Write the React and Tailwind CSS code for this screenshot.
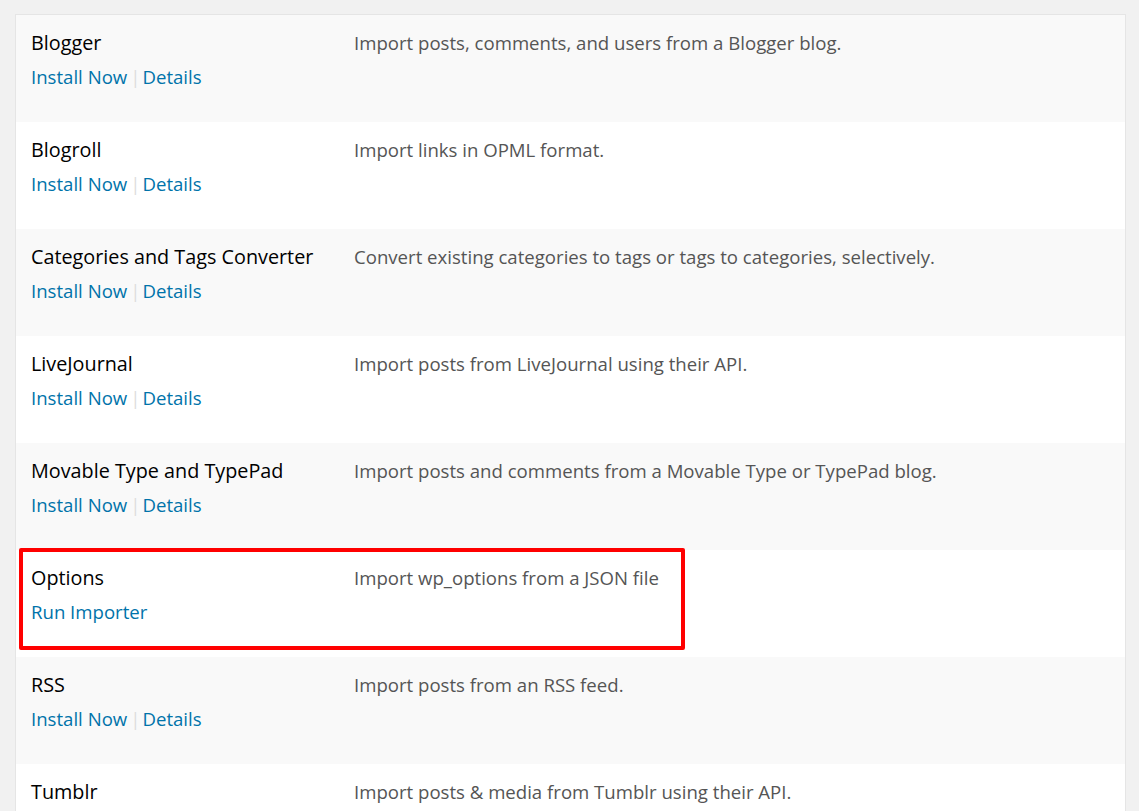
const importers = [
  { name: "Blogger", desc: "Import posts, comments, and users from a Blogger blog." },
  { name: "Blogroll", desc: "Import links in OPML format." },
  { name: "Categories and Tags Converter", desc: "Convert existing categories to tags or tags to categories, selectively." },
  { name: "LiveJournal", desc: "Import posts from LiveJournal using their API." },
  { name: "Movable Type and TypePad", desc: "Import posts and comments from a Movable Type or TypePad blog." },
  { name: "Options", desc: "Import wp_options from a JSON file", installed: true },
  { name: "RSS", desc: "Import posts from an RSS feed." },
  { name: "Tumblr", desc: "Import posts & media from Tumblr using their API." },
]

const ImporterRow = ({ item, striped }) => {
  return (
    <div className={`relative flex h-[107px] shrink-0 pl-[15px] pt-[12px] ${striped ? "bg-[#f9f9f9]" : "bg-white"}`}>
      <div className="w-[323px] shrink-0">
        <div className="text-[19.8px] leading-[32px] text-black">{item.name}</div>
        <div className="mt-[2px] text-[18.6px] leading-[32px] text-[#0073aa]">
          {item.installed ? (
            <a href="#">Run Importer</a>
          ) : (
            <>
              <a href="#">Install Now</a>
              <span className="ml-[3px] mr-[2px] text-[#ddd]">|</span>
              <a href="#">Details</a>
            </>
          )}
        </div>
      </div>
      <div className="text-[18.6px] leading-[32px] text-[#555]">{item.desc}</div>
      {item.installed && (
        <div className="pointer-events-none absolute left-[3px] top-[-2px] h-[102px] w-[666px] rounded-[2px] border-4 border-[#ff0000]" />
      )}
    </div>
  )
}

export default function App() {
  return (
    <div
      className="h-[811px] overflow-hidden bg-[#f1f1f1] pl-[15px] pr-[13px] pt-[14px]"
      style={{ fontFamily: '"Open Sans", "Noto Sans", sans-serif' }}
    >
      <div className="flex flex-col border border-b-0 border-[#e5e5e5]">
        {importers.map((item, i) => (
          <ImporterRow key={item.name} item={item} striped={i % 2 === 0} />
        ))}
      </div>
    </div>
  )
}
